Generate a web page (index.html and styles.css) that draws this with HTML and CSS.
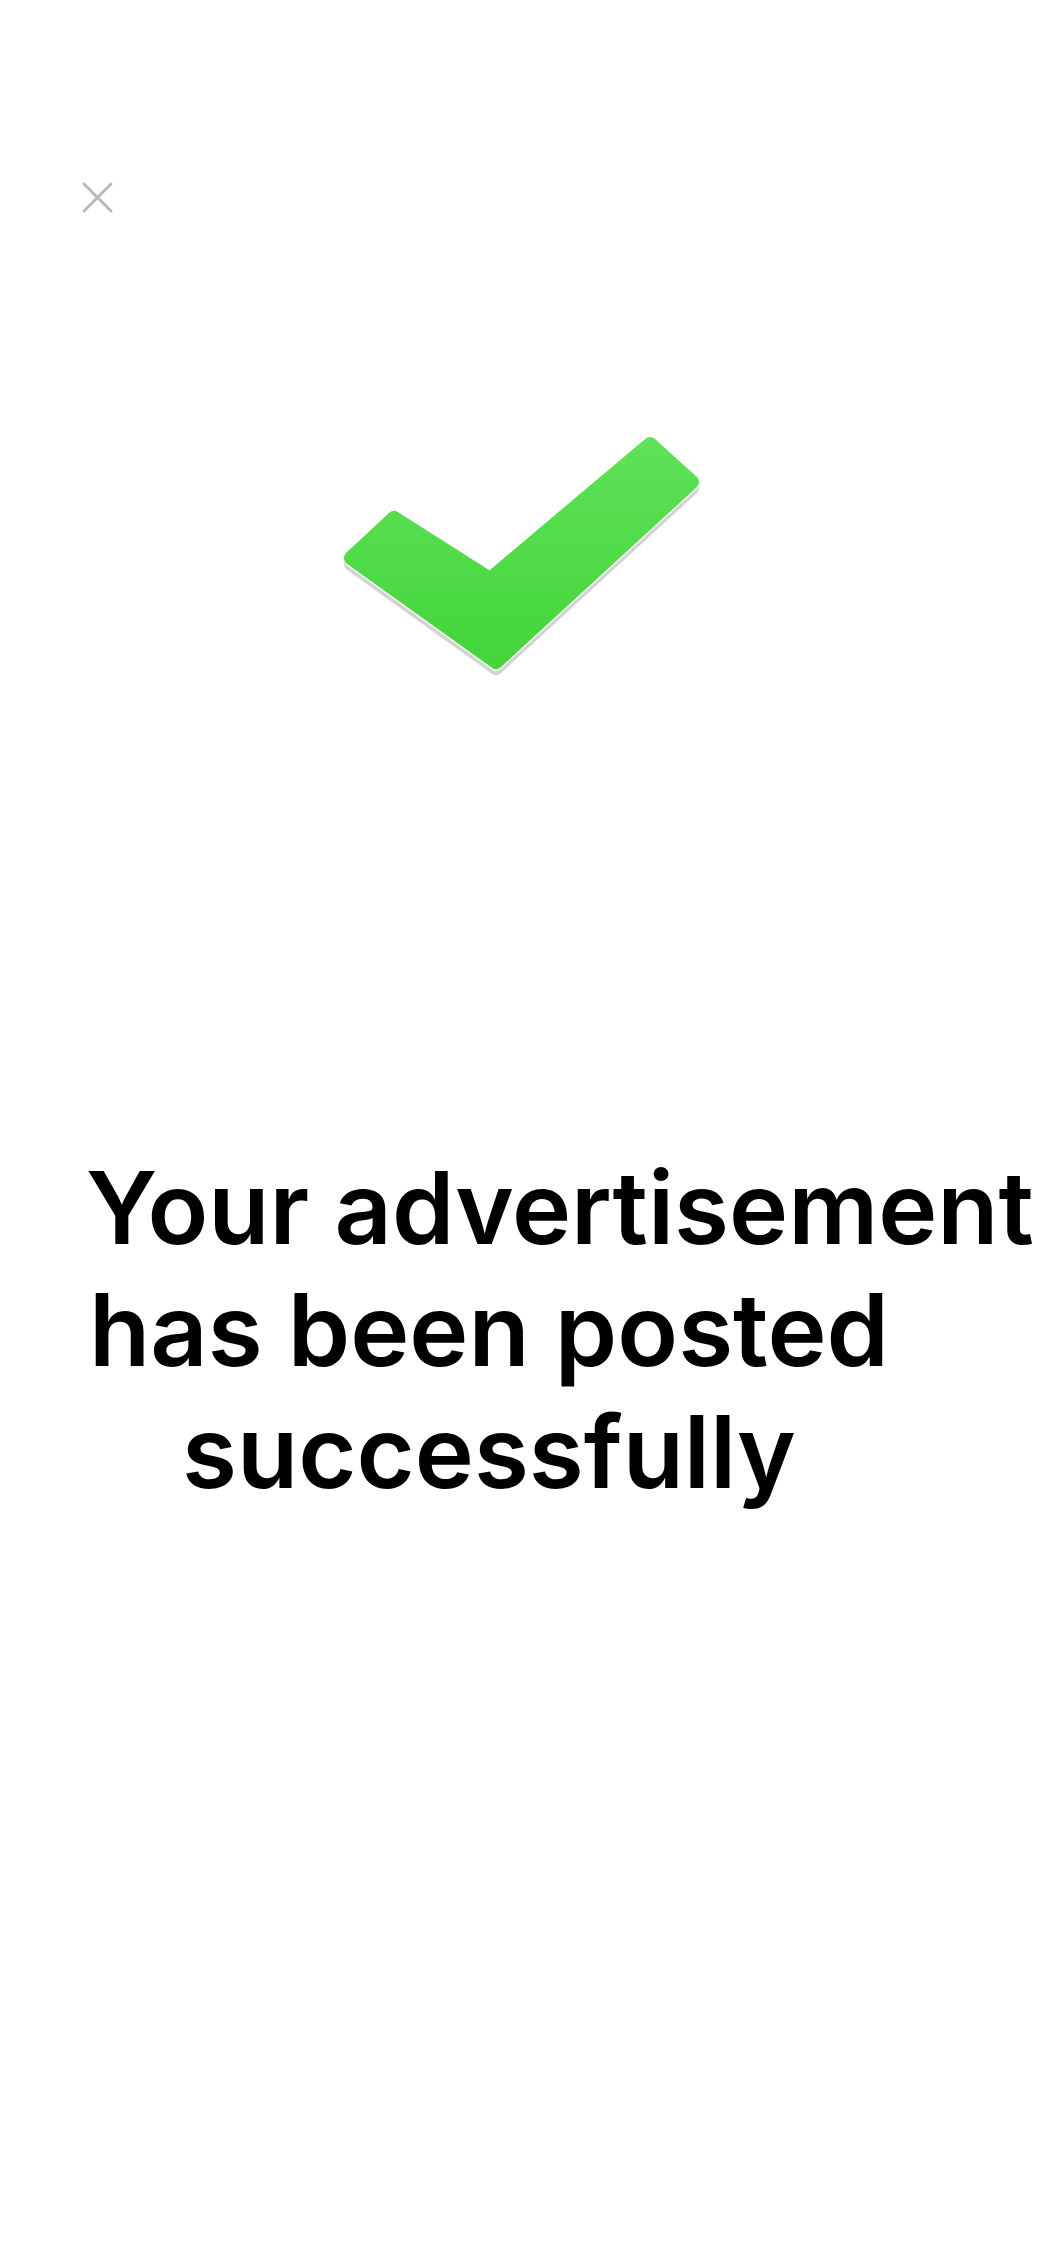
FILE: index.html
```html
<!DOCTYPE html>
<html lang="en">
<head>
<meta charset="utf-8">
<title>Posted</title>
<link rel="stylesheet" href="styles.css">
</head>
<body>
<main class="page">
  <header class="topbar">
    <button class="close" aria-label="Close">
      <svg width="31" height="31" viewBox="0 0 31 31">
        <path d="M2 2 L29 29 M29 2 L2 29" stroke="#b9b9b9" stroke-width="3" stroke-linecap="round" fill="none"/>
      </svg>
    </button>
  </header>
  <div class="check">
    <svg width="370" height="250" viewBox="0 0 370 250">
      <defs>
        <linearGradient id="g" x1="0" y1="0" x2="0" y2="1">
          <stop offset="0" stop-color="#5fe158"/>
          <stop offset="1" stop-color="#43d53a"/>
        </linearGradient>
      </defs>
      <polygon points="58,88 154,149 314,14 356,52 160,232 15,128" transform="translate(0,6)" fill="#d2d2d2" stroke="#d2d2d2" stroke-width="14" stroke-linejoin="round"/>
      <polygon points="58,88 154,149 314,14 356,52 160,232 15,128" transform="translate(0,2)" fill="#f4f4f4" stroke="#f4f4f4" stroke-width="14" stroke-linejoin="round"/>
      <polygon points="58,88 154,149 314,14 356,52 160,232 15,128" fill="url(#g)" stroke="url(#g)" stroke-width="14" stroke-linejoin="round"/>
    </svg>
  </div>
  <h1 class="message">Your&nbsp;advertisement has been posted successfully</h1>
</main>
</body>
</html>
```

FILE: styles.css
```css
html, body {
  margin: 0;
  padding: 0;
  background: #ffffff;
}
.page {
  width: 1042px;
  min-height: 2256px;
  padding-top: 182px;
  box-sizing: border-box;
  font-family: Inter, "Noto Sans", sans-serif;
}
.topbar {
  padding-left: 82px;
  height: 31px;
}
.close {
  display: block;
  padding: 0;
  margin: 0;
  border: 0;
  background: none;
  width: 31px;
  height: 31px;
}
.close svg {
  display: block;
}
.check {
  margin-top: 217px;
  display: flex;
  justify-content: center;
}
.check svg {
  display: block;
}
.message {
  margin: 467px 0 0 86px;
  width: 806px;
  font-size: 100px;
  line-height: 122px;
  font-weight: 600;
  color: #000;
  text-align: center;
  letter-spacing: 0;
}
```
